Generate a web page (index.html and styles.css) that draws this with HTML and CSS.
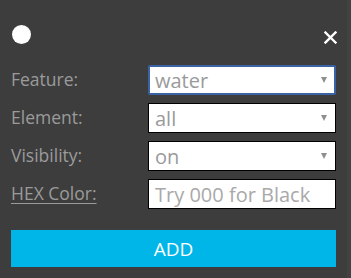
FILE: index.html
```html
<!DOCTYPE html>
<html lang="en">
<head>
    <meta charset="UTF-8">
    <title>Map Style</title>
    <link rel="stylesheet" href="styles.css">
</head>
<body>
<div class="panel">
    <div class="panel-head">
        <span class="dot"></span>
        <svg class="close" width="13" height="13" viewBox="0 0 13 13">
            <path d="M1.5 1.5 L11.5 11.5 M11.5 1.5 L1.5 11.5" stroke="#ffffff" stroke-width="2.4" stroke-linecap="square"/>
        </svg>
    </div>

    <div class="form-grid">
        <label class="field-label">Feature:</label>
        <div class="select focused"><span>water</span><i class="arrow"></i></div>

        <label class="field-label">Element:</label>
        <div class="select"><span>all</span><i class="arrow"></i></div>

        <label class="field-label">Visibility:</label>
        <div class="select"><span>on</span><i class="arrow"></i></div>

        <label class="field-label"><u>HEX Color:</u></label>
        <div class="text-input"><span class="placeholder">Try 000 for Black</span></div>
    </div>

    <button class="add-btn">ADD</button>
</div>
<div class="edge"></div>
</body>
</html>
```

FILE: styles.css
```css
html, body {
    margin: 0;
    height: 100%;
}
body {
    background-color: #3d3d3d;
    font-family: "Open Sans", sans-serif;
    display: flex;
}
.panel {
    flex: 1;
    padding: 25px 10px 0 11px;
}
.edge {
    width: 4px;
    background-color: #424242;
}

.panel-head {
    display: flex;
    justify-content: space-between;
    align-items: center;
    height: 19px;
}
.dot {
    width: 19px;
    height: 19px;
    border-radius: 50%;
    background-color: #ffffff;
    margin-left: 1px;
}
.close {
    margin-top: 5px;
}

.form-grid {
    display: grid;
    grid-template-columns: 137px 188px;
    row-gap: 8px;
    margin-top: 21px;
}
.field-label {
    color: #9b9b9b;
    font-size: 17.5px;
    line-height: 24px;
    padding-top: 2px;
}
.field-label u {
    text-decoration-thickness: 1px;
    text-underline-offset: 3px;
}

.select, .text-input {
    box-sizing: border-box;
    height: 30px;
    background-color: #ffffff;
    border: 1px solid #000000;
    display: flex;
    align-items: center;
    justify-content: space-between;
    padding: 0 8px 0 6px;
    font-size: 20px;
    color: #9a9a9a;
}
.select span, .text-input span {
    line-height: 30px;
    margin-top: 1px;
}
.focused {
    border: 2px solid #3a63a3;
    border-radius: 2px;
    padding-left: 5px;
    padding-right: 7px;
}
.arrow {
    width: 0;
    height: 0;
    border-left: 3px solid transparent;
    border-right: 3px solid transparent;
    border-top: 6px solid #8f8f8f;
}
.placeholder {
    color: #a9a9a9;
}

.add-btn {
    display: block;
    width: 325px;
    height: 37px;
    margin-top: 21px;
    border: none;
    background-color: #00b6e8;
    color: #ffffff;
    font-family: "Open Sans", sans-serif;
    font-size: 19px;
    padding: 0;
}
```
